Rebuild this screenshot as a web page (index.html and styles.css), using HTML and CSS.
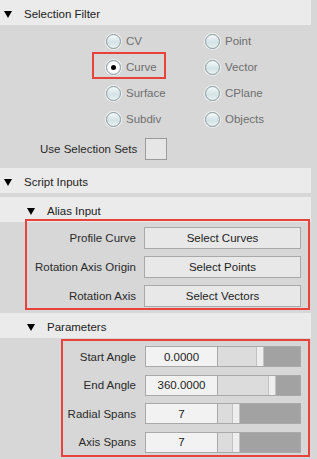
FILE: index.html
```html
<!DOCTYPE html>
<html lang="en">
<head>
    <meta charset="UTF-8">
    <meta name="viewport" content="width=device-width, initial-scale=1.0">
    <title>Revolve Options</title>
    <link rel="stylesheet" href="styles.css">
</head>
<body>
    <div class="panel">

        <!-- Selection Filter -->
        <div class="frame">
            <div class="frame-head"><span class="arrow"></span>Selection Filter</div>
            <div class="filter">
                <div class="radio-grid">
                    <div class="radio"><span class="dot"></span>CV</div>
                    <div class="radio"><span class="dot"></span>Point</div>
                    <div class="radio checked marked"><span class="dot"></span>Curve</div>
                    <div class="radio"><span class="dot"></span>Vector</div>
                    <div class="radio"><span class="dot"></span>Surface</div>
                    <div class="radio"><span class="dot"></span>CPlane</div>
                    <div class="radio"><span class="dot"></span>Subdiv</div>
                    <div class="radio"><span class="dot"></span>Objects</div>
                </div>
                <div class="check-row">
                    <span>Use Selection Sets</span>
                    <span class="checkbox"></span>
                </div>
            </div>
        </div>

        <!-- Script Inputs -->
        <div class="frame">
            <div class="frame-head"><span class="arrow"></span>Script Inputs</div>

            <div class="frame-head sub"><span class="arrow"></span>Alias Input</div>
            <div class="box alias">
                <div class="row">
                    <span class="label">Profile Curve</span>
                    <span class="button">Select Curves</span>
                </div>
                <div class="row">
                    <span class="label">Rotation Axis Origin</span>
                    <span class="button">Select Points</span>
                </div>
                <div class="row">
                    <span class="label">Rotation Axis</span>
                    <span class="button">Select Vectors</span>
                </div>
            </div>

            <div class="frame-head sub params-head"><span class="arrow"></span>Parameters</div>
            <div class="box params">
                <div class="row">
                    <span class="label">Start Angle</span>
                    <span class="field">0.0000</span>
                    <span class="slider"><span class="track" style="width: 38px"></span><span class="thumb"></span><span class="rest"></span></span>
                </div>
                <div class="row">
                    <span class="label">End Angle</span>
                    <span class="field">360.0000</span>
                    <span class="slider"><span class="track" style="width: 50px"></span><span class="thumb"></span><span class="rest"></span></span>
                </div>
                <div class="row">
                    <span class="label">Radial Spans</span>
                    <span class="field">7</span>
                    <span class="slider"><span class="track" style="width: 14px"></span><span class="thumb"></span><span class="rest"></span></span>
                </div>
                <div class="row">
                    <span class="label">Axis Spans</span>
                    <span class="field">7</span>
                    <span class="slider"><span class="track" style="width: 14px"></span><span class="thumb"></span><span class="rest"></span></span>
                </div>
            </div>
        </div>

    </div>
</body>
</html>
```

FILE: styles.css
```css
body {
    margin: 0;
    background-color: #d7d7d7;
    font-family: "Liberation Sans", Arial, sans-serif;
    font-size: 11.5px;
    color: #2a2a2a;
}
.panel {
    width: 317px;
    height: 459px;
    overflow: hidden;
}
.frame-head {
    height: 25px;
    margin-right: 6px;
    padding-left: 4px;
    background: #ebebeb;
    display: flex;
    align-items: center;
    padding-top: 3px;
    box-sizing: border-box;
    color: #222;
}
.frame-head .arrow {
    width: 0;
    height: 0;
    border-left: 4px solid transparent;
    border-right: 4px solid transparent;
    border-top: 7px solid #000;
    margin-right: 12px;
}
.frame-head.sub {
    margin-top: 4px;
    padding-left: 27px;
}
.frame-head.params-head {
    margin-top: 3px;
}

/* selection filter */
.filter {
    padding-top: 3px;
    margin-bottom: 8px;
}
.radio-grid {
    display: grid;
    grid-template-columns: 99px 99px;
    grid-auto-rows: 26px;
    padding-left: 106px;
}
.radio {
    display: flex;
    align-items: center;
    color: #6f6f6f;
    position: relative;
}
.dot {
    width: 13px;
    height: 13px;
    border: 1px solid #8c9a9e;
    border-radius: 50%;
    margin-right: 5px;
    background: linear-gradient(#f6fafa, #d3e3e5 55%, #e9f1f2);
    box-shadow: 0 0 0 1px #eef3f3;
    display: flex;
    align-items: center;
    justify-content: center;
}
.radio.checked .dot {
    background: radial-gradient(#ffffff 40%, #e2ebec);
}
.radio.checked .dot::before {
    content: '';
    width: 5px;
    height: 5px;
    border-radius: 50%;
    background: #000;
}
.marked::after {
    content: '';
    position: absolute;
    left: -14px;
    top: -2px;
    width: 70px;
    height: 23px;
    border: 2px solid #e8423d;
}
.check-row {
    margin-top: 6px;
    display: flex;
    align-items: center;
    padding-left: 40px;
    height: 22px;
}
.checkbox {
    width: 20px;
    height: 20px;
    margin-left: 8px;
    border: 1px solid #9a9a9a;
    background: #e6e6e6;
}

/* boxed rows */
.box {
    border: 2px solid #e8423d;
    margin-right: 7px;
    position: relative;
}
.box .row {
    display: flex;
    align-items: stretch;
}
.box .label {
    text-align: right;
    display: flex;
    align-items: center;
    justify-content: flex-end;
    flex-shrink: 0;
}
.alias {
    margin-top: -3px;
    margin-left: 25px;
    padding: 6px 7px 1px 0;
}
.alias .row {
    height: 22px;
    margin-bottom: 7px;
}
.alias .row:last-child {
    margin-bottom: 0;
}
.alias .label {
    width: 109px;
    margin-right: 8px;
}
.button {
    flex: 1;
    border: 1px solid #a9a9a9;
    background: #e8e8e8;
    display: flex;
    align-items: center;
    justify-content: center;
    color: #222;
}

.params {
    margin-top: 1px;
    margin-left: 61px;
    padding: 5px 7px 2px 0;
}
.params .row {
    height: 21px;
    margin-bottom: 7.5px;
}
.params .row:last-child {
    margin-bottom: 0;
}
.params .label {
    width: 73px;
    margin-right: 9px;
}
.field {
    width: 73px;
    box-sizing: border-box;
    border: 1px solid #a9a9a9;
    background: #f2f2f2;
    display: flex;
    align-items: center;
    justify-content: center;
    color: #222;
}
.slider {
    flex: 1;
    display: flex;
    border: 1px solid #a9a9a9;
    border-left: none;
}
.track {
    background: #dcdcdc;
    border-right: 1px solid #c2c2c2;
}
.thumb {
    width: 6px;
    background: #eeeeee;
    border-right: 1px solid #c2c2c2;
}
.rest {
    flex: 1;
    background: #a2a2a2;
}
```
